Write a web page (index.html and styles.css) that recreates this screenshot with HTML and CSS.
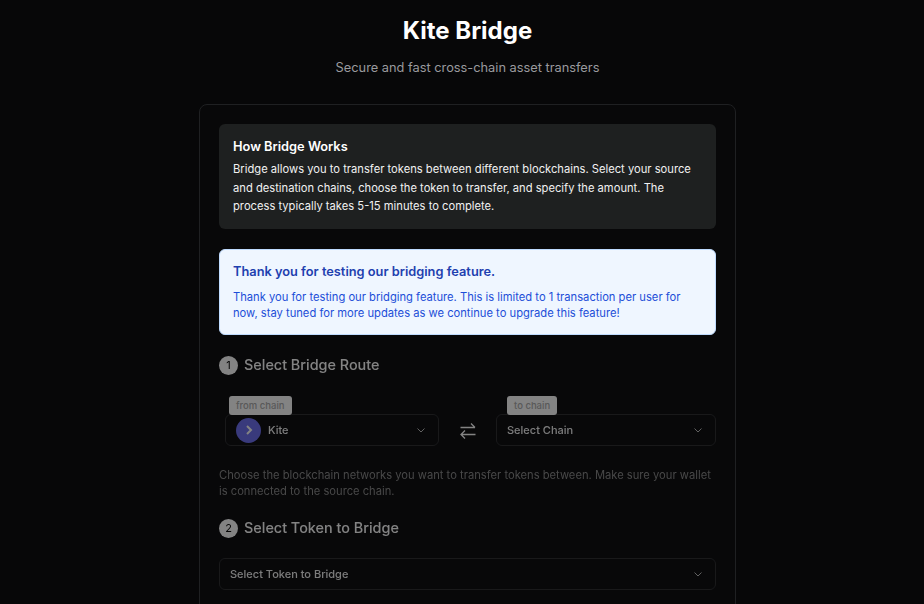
FILE: index.html
```html
<!DOCTYPE html>
<html lang="en">
<head>
<meta charset="utf-8">
<title>Kite Bridge</title>
<link rel="stylesheet" href="styles.css">
</head>
<body>
<main class="page">
  <header class="hero">
    <h1 class="hero-title">Kite Bridge</h1>
    <p class="hero-sub">Secure and fast cross-chain asset transfers</p>
  </header>
  <section class="card">
    <div class="info">
      <h2 class="info-title">How Bridge Works</h2>
      <p class="info-text">Bridge allows you to transfer tokens between different blockchains. Select your source and destination chains, choose the token to transfer, and specify the amount. The process typically takes 5-15 minutes to complete.</p>
    </div>
    <div class="notice">
      <h2 class="notice-title">Thank you for testing our bridging feature.</h2>
      <p class="notice-text">Thank you for testing our bridging feature. This is limited to 1 transaction per user for now, stay tuned for more updates as we continue to upgrade this feature!</p>
    </div>
    <div class="steps">
      <div class="step-head"><span class="step-num">1</span><h3 class="step-title">Select Bridge Route</h3></div>
      <div class="route">
        <div class="field field-from">
          <span class="tag tag-from">from chain</span>
          <button class="select" type="button">
            <span class="chain-logo"><svg width="10" height="12" viewBox="0 0 10 12"><path d="M3 2l4 4-4 4" fill="none" stroke="#fff" stroke-width="2"/></svg></span>
            <span class="select-label">Kite</span>
            <svg class="chev" width="12" height="12" viewBox="0 0 12 12"><path d="M2.5 4.5L6 8l3.5-3.5" fill="none" stroke="currentColor" stroke-width="1"/></svg>
          </button>
        </div>
        <svg class="swap" width="18" height="18" viewBox="0 0 18 18" fill="none" stroke="currentColor" stroke-width="1.3"><path d="M1.5 5.5h14.5M12 1.5l4 4M16.5 12.5H2M6 8.5l-4 4 4 4"/></svg>
        <div class="field field-to">
          <span class="tag tag-to">to chain</span>
          <button class="select" type="button">
            <span class="select-label">Select Chain</span>
            <svg class="chev" width="12" height="12" viewBox="0 0 12 12"><path d="M2.5 4.5L6 8l3.5-3.5" fill="none" stroke="currentColor" stroke-width="1"/></svg>
          </button>
        </div>
      </div>
      <p class="hint">Choose the blockchain networks you want to transfer tokens between. Make sure your wallet is connected to the source chain.</p>
      <div class="step-head step-two"><span class="step-num">2</span><h3 class="step-title">Select Token to Bridge</h3></div>
      <button class="select select-token" type="button">
        <span class="select-label">Select Token to Bridge</span>
        <svg class="chev" width="12" height="12" viewBox="0 0 12 12"><path d="M2.5 4.5L6 8l3.5-3.5" fill="none" stroke="currentColor" stroke-width="1"/></svg>
      </button>
    </div>
  </section>
</main>
</body>
</html>
```
FILE: styles.css
```css
* { box-sizing: border-box; }
html, body { margin: 0; height: 100%; overflow: hidden; }
body { background: #070708; color: #fff; font-family: Inter, "Liberation Sans", sans-serif; }
.page { display: flex; flex-direction: column; align-items: center; padding: 13px 0 0 11px; }
.hero { text-align: center; }
.hero-title { margin: 0; font-size: 24px; line-height: 36px; font-weight: 700; color: #fff; }
.hero-sub { margin: 9px 0 0; font-size: 12.8px; line-height: 20px; color: #9a9a9e; }
.card { width: 537px; margin-top: 26px; padding: 19px; height: 700px; border: 1px solid #1f2022; border-radius: 8px; background: #080809; }
.info { height: 105px; padding: 14px; background: #1e2020; border-radius: 6px; }
.info-title { margin: 0; font-size: 12.8px; line-height: 18px; font-weight: 600; color: #fff; }
.info-text { margin: 4px 0 0; font-size: 11.2px; line-height: 18.5px; color: #f1f1f1; }
.notice { height: 86px; margin-top: 20px; padding: 13px; background: #eff6ff; border: 1px solid #bfdbfe; border-radius: 6px; }
.notice-title { margin: 0; font-size: 12.8px; line-height: 18px; font-weight: 600; color: #1e40af; }
.notice-text { margin: 8px 0 0; font-size: 11.2px; line-height: 16px; color: #1d4ed8; }
.steps { opacity: .5; margin-top: 20px; }
.step-head { display: flex; align-items: center; gap: 6px; height: 20px; }
.step-num { width: 19px; height: 19px; border-radius: 50%; background: #fff; color: #000; font-size: 11px; display: flex; align-items: center; justify-content: center; }
.step-title { margin: 0; font-size: 14.4px; line-height: 20px; font-weight: 500; color: #fff; }
.route { display: flex; align-items: flex-end; margin-top: 39px; padding-left: 6px; }
.field { position: relative; }
.field-from { width: 214px; }
.field-to { width: 220px; }
.tag { position: absolute; top: -18px; height: 19px; padding: 0 7px; display: flex; align-items: center; font-size: 9.5px; font-weight: 500; background: #fff; color: #aaa; border-radius: 3px; z-index: 1; }
.tag-from { left: 4px; }
.tag-to { left: 11px; }
.select { width: 100%; height: 32px; display: flex; align-items: center; padding: 0 10px; background: transparent; border: 1px solid #2a2b2d; border-radius: 6px; color: #fff; font: inherit; text-align: left; }
.select-label { flex: 1; font-size: 11px; font-weight: 500; color: #f0f0f0; }
.chev { color: #bbb; margin-right: 1px; }
.chain-logo { width: 25px; height: 25px; border-radius: 50%; background: #6a6cf0; display: flex; align-items: center; justify-content: center; margin-right: 7px; }
.swap { margin: 0 19px 6px 20px; color: #fff; flex: none; }
.hint { margin: 21px 0 0; font-size: 11.2px; line-height: 16px; color: #888; }
.step-two { margin-top: 19px; }
.select-token { margin-top: 20px; }
```
